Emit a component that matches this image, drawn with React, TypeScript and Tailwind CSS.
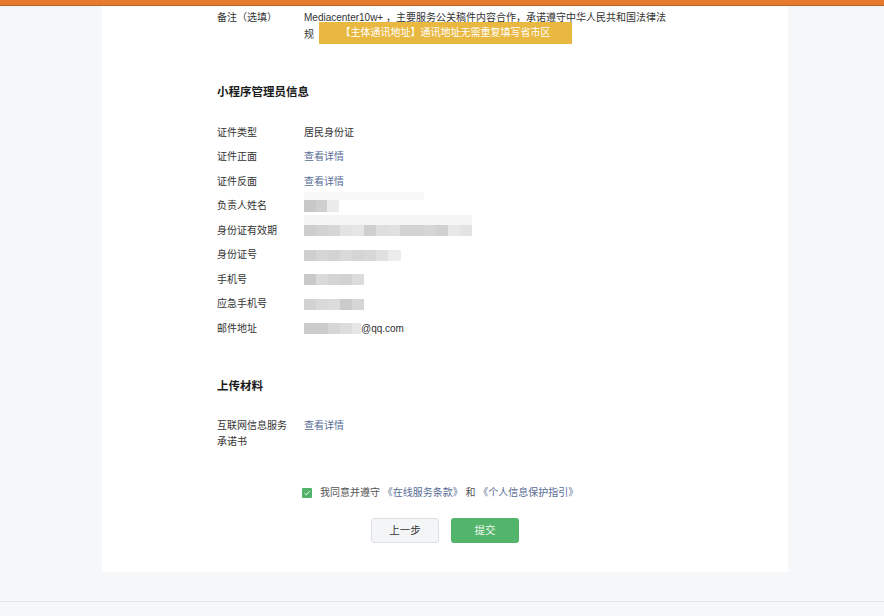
import React from 'react';

type Cell = [number, string];

// pixelated stand-ins for redacted values
const Mosaic = ({ cells, h = 11 }: { cells: Cell[]; h?: number }) => (
  <div className="flex">
    {cells.map(([w, c], i) => (
      <div key={i} style={{ width: w, height: h, background: c }} />
    ))}
  </div>
);

const Row = ({ label, children }: { label: string; children: React.ReactNode }) => (
  <div className="flex leading-[16px]">
    <div className="w-[87px] shrink-0 pr-[12px] text-[#333]">{label}</div>
    <div className="flex min-h-[16px] items-center text-[#333]">{children}</div>
  </div>
);

const Link = ({ children }: { children: React.ReactNode }) => (
  <span className="text-[#576b95]">{children}</span>
);

export default function App() {
  return (
    <div className="min-h-screen bg-[#f6f7f9] text-[10px] font-['Liberation_Sans','Noto_Sans_CJK_SC',sans-serif]">
      {/* top bar */}
      <div className="h-[5px] bg-[#e67b2f]" />
      <div className="h-px bg-[#b9602b]" />

      <div className="relative ml-[102px] w-[686px] bg-white pt-[4px] pb-[28.7px]">
        {/* tooltip banner */}
        <div className="absolute left-[217px] top-[15.7px] flex h-[22.6px] w-[253px] items-center justify-center bg-[#e9b840] text-white">
          【主体通讯地址】通讯地址无需重复填写省市区
        </div>

        <div className="pl-[115px]">
          <div className="flex leading-[16.5px]">
            <div className="w-[87px] shrink-0 text-[#333]">备注（选填）</div>
            <div className="w-[368px] text-[#333]">
              Mediacenter10w+ ，主要服务公关稿件内容合作，承诺遵守中华人民共和国法律法规
            </div>
          </div>

          <div className="mt-[41px] text-[11.5px] font-bold leading-[16px] text-[#1a1a1a]">小程序管理员信息</div>

          <div className="mt-[25px] flex flex-col gap-[8.45px]">
            <Row label="证件类型">居民身份证</Row>
            <Row label="证件正面">
              <Link>查看详情</Link>
            </Row>
            <Row label="证件反面">
              <Link>查看详情</Link>
            </Row>
            <Row label="负责人姓名">
              <div className="relative">
                <div className="absolute -top-[8px] left-0 h-[8px] w-[120px] bg-[#f8f8f8]" />
                <Mosaic h={12} cells={[[12, '#c8c8c8'], [11, '#cfcfcf'], [12, '#ebebeb']]} />
              </div>
            </Row>
            <Row label="身份证有效期">
              <div className="relative">
                <div className="absolute -top-[10px] left-0 h-[10px] w-[168px] bg-[#f5f5f5]" />
                <Mosaic
                  cells={[
                    [12, '#cdcdcd'], [12, '#d2d2d2'], [12, '#d6d6d6'], [12, '#e3e3e3'],
                    [12, '#e6e6e6'], [12, '#cfcfcf'], [12, '#dedede'], [12, '#e0e0e0'],
                    [12, '#d3d3d3'], [12, '#d3d3d3'], [12, '#d6d6d6'], [12, '#d1d1d1'],
                    [12, '#e8e8e8'], [12, '#e3e3e3'],
                  ]}
                />
              </div>
            </Row>
            <Row label="身份证号">
              <Mosaic
                cells={[
                  [12, '#cfcfcf'], [12, '#d6d6d6'], [12, '#d3d3d3'], [12, '#d9d9d9'],
                  [12, '#d5d5d5'], [12, '#d8d8d8'], [12, '#e0e0e0'], [13, '#ececec'],
                ]}
              />
            </Row>
            <Row label="手机号">
              <Mosaic cells={[[12, '#c9c9c9'], [12, '#dadada'], [12, '#d4d4d4'], [12, '#d2d2d2'], [12, '#dbdbdb']]} />
            </Row>
            <Row label="应急手机号">
              <Mosaic cells={[[12, '#d2d2d2'], [12, '#d9d9d9'], [12, '#dcdcdc'], [12, '#cbcbcb'], [12, '#d6d6d6']]} />
            </Row>
            <Row label="邮件地址">
              <Mosaic cells={[[12, '#cccccc'], [12, '#cccccc'], [12, '#d6d6d6'], [12, '#dddddd'], [9, '#e6e6e6']]} />
              <span>@qq.com</span>
            </Row>
          </div>

          <div className="mt-[41.7px] text-[11.5px] font-bold leading-[16px] text-[#1a1a1a]">上传材料</div>

          <div className="mt-[23.7px]">
            <Row label="互联网信息服务承诺书">
              <div className="self-start">
                <Link>查看详情</Link>
              </div>
            </Row>
          </div>

          <div className="ml-[85px] mt-[35.3px] flex items-center gap-[8px] leading-[16px]">
            <div className="flex h-[10px] w-[10px] items-center justify-center rounded-[1px] bg-[#52b46a]">
              <svg width="8" height="8" viewBox="0 0 8 8" fill="none">
                <path d="M1.5 4.2 L3.2 5.8 L6.6 2.3" stroke="white" strokeWidth="0.9" />
              </svg>
            </div>
            <div className="text-[#555]">
              我同意并遵守 <Link>《在线服务条款》</Link> 和 <Link>《个人信息保护指引》</Link>
            </div>
          </div>
        </div>

        <div className="mt-[17px] flex justify-center gap-[12px]">
          <button className="h-[25.3px] w-[68px] rounded-[3px] border border-[#dcdfe3] bg-[#f4f5f7] text-[10.5px] text-[#333]">
            上一步
          </button>
          <button className="h-[25.3px] w-[68px] rounded-[3px] bg-[#53b46b] text-[10.5px] text-[#eef8f0]">
            提交
          </button>
        </div>
      </div>

      <div className="h-[29px]" />
      <div className="h-px bg-[#e2e4e8]" />
    </div>
  );
}
